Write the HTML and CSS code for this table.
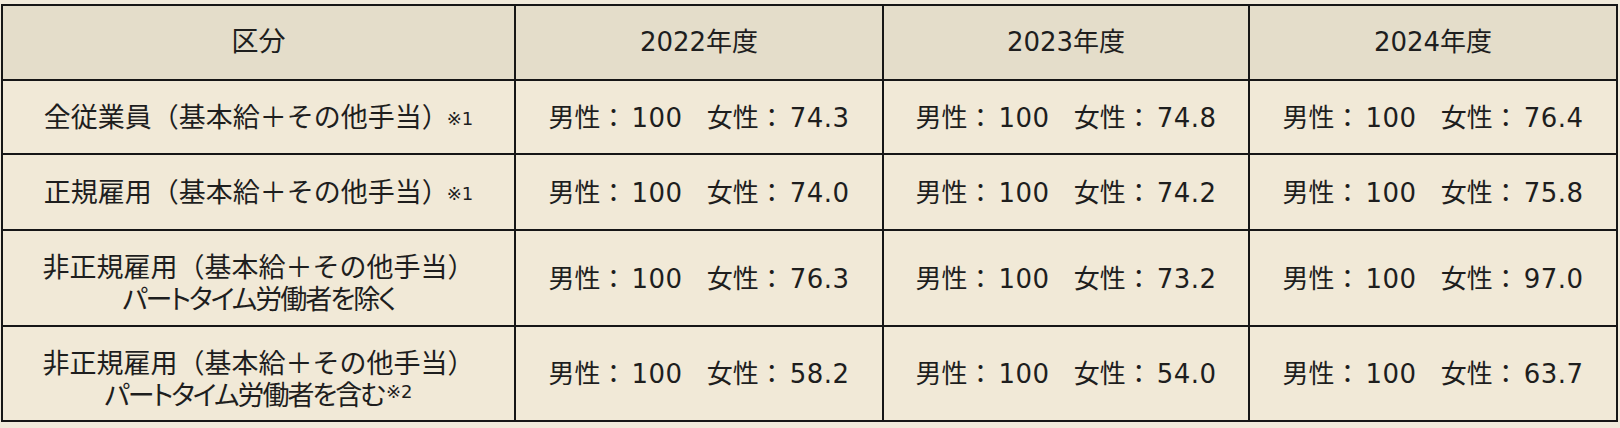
FILE: index.html
```html
<!DOCTYPE html>
<html lang="ja">
<head>
<meta charset="utf-8">
<link rel="stylesheet" href="styles.css">
</head>
<body>
<div class="table">
  <div class="cell head first">区分</div>
  <div class="cell head">2022年度</div>
  <div class="cell head">2023年度</div>
  <div class="cell head">2024年度</div>

  <div class="cell label">全従業員（基本給＋その他手当）<sup class="note gap">※1</sup></div>
  <div class="cell">男性：<span class="v">100</span><span class="f">女性：<span class="v">74.3</span></span></div>
  <div class="cell">男性：<span class="v">100</span><span class="f">女性：<span class="v">74.8</span></span></div>
  <div class="cell">男性：<span class="v">100</span><span class="f">女性：<span class="v">76.4</span></span></div>

  <div class="cell label">正規雇用（基本給＋その他手当）<sup class="note gap">※1</sup></div>
  <div class="cell">男性：<span class="v">100</span><span class="f">女性：<span class="v">74.0</span></span></div>
  <div class="cell">男性：<span class="v">100</span><span class="f">女性：<span class="v">74.2</span></span></div>
  <div class="cell">男性：<span class="v">100</span><span class="f">女性：<span class="v">75.8</span></span></div>

  <div class="cell label two"><span>非正規雇用（基本給＋その他手当）</span><span class="sub">パートタイム労働者を除く</span></div>
  <div class="cell">男性：<span class="v">100</span><span class="f">女性：<span class="v">76.3</span></span></div>
  <div class="cell">男性：<span class="v">100</span><span class="f">女性：<span class="v">73.2</span></span></div>
  <div class="cell">男性：<span class="v">100</span><span class="f">女性：<span class="v">97.0</span></span></div>

  <div class="cell label two"><span>非正規雇用（基本給＋その他手当）</span><span class="sub">パートタイム労働者を含む<sup class="note">※2</sup></span></div>
  <div class="cell">男性：<span class="v">100</span><span class="f">女性：<span class="v">58.2</span></span></div>
  <div class="cell">男性：<span class="v">100</span><span class="f">女性：<span class="v">54.0</span></span></div>
  <div class="cell">男性：<span class="v">100</span><span class="f">女性：<span class="v">63.7</span></span></div>
</div>
</body>
</html>
```

FILE: styles.css
```css
html, body {
  margin: 0;
  padding: 0;
  background: #f1eadb;
}

body {
  padding: 4px 0 0 1px;
  font-family: "DejaVu Sans", "Noto Sans CJK JP", sans-serif;
  font-size: 26px;
  color: #1e1e1e;
}

.table {
  display: grid;
  grid-template-columns: 513px 368px 366px 368px;
  grid-template-rows: 75px 74px 76px 96px 95px;
  width: 1617px;
  box-sizing: border-box;
  border-top: 2px solid #161616;
  border-left: 2px solid #161616;
}

.cell {
  display: flex;
  align-items: center;
  justify-content: center;
  background: #f1e9d7;
  border-right: 2px solid #161616;
  border-bottom: 2px solid #161616;
  line-height: 1.2;
  white-space: nowrap;
  padding-top: 3px;
}

.cell.head {
  background: #e4ddca;
  padding-top: 0;
}

.cell.head.first {
  font-size: 27px;
}

.cell.label {
  font-size: 27px;
}

.cell.two {
  flex-direction: column;
  line-height: 32px;
  padding-top: 12px;
}

.sub {
  font-feature-settings: "palt" 1;
  letter-spacing: -2px;
}

.sub .note {
  letter-spacing: 0;
  margin-left: 2px;
}

.v {
  margin-left: 5px;
  letter-spacing: 0.5px;
}

.f {
  margin-left: 24px;
}

.note {
  font-size: 18px;
  line-height: 1;
  vertical-align: 7px;
}

.note.gap {
  margin-left: -2px;
}
```
